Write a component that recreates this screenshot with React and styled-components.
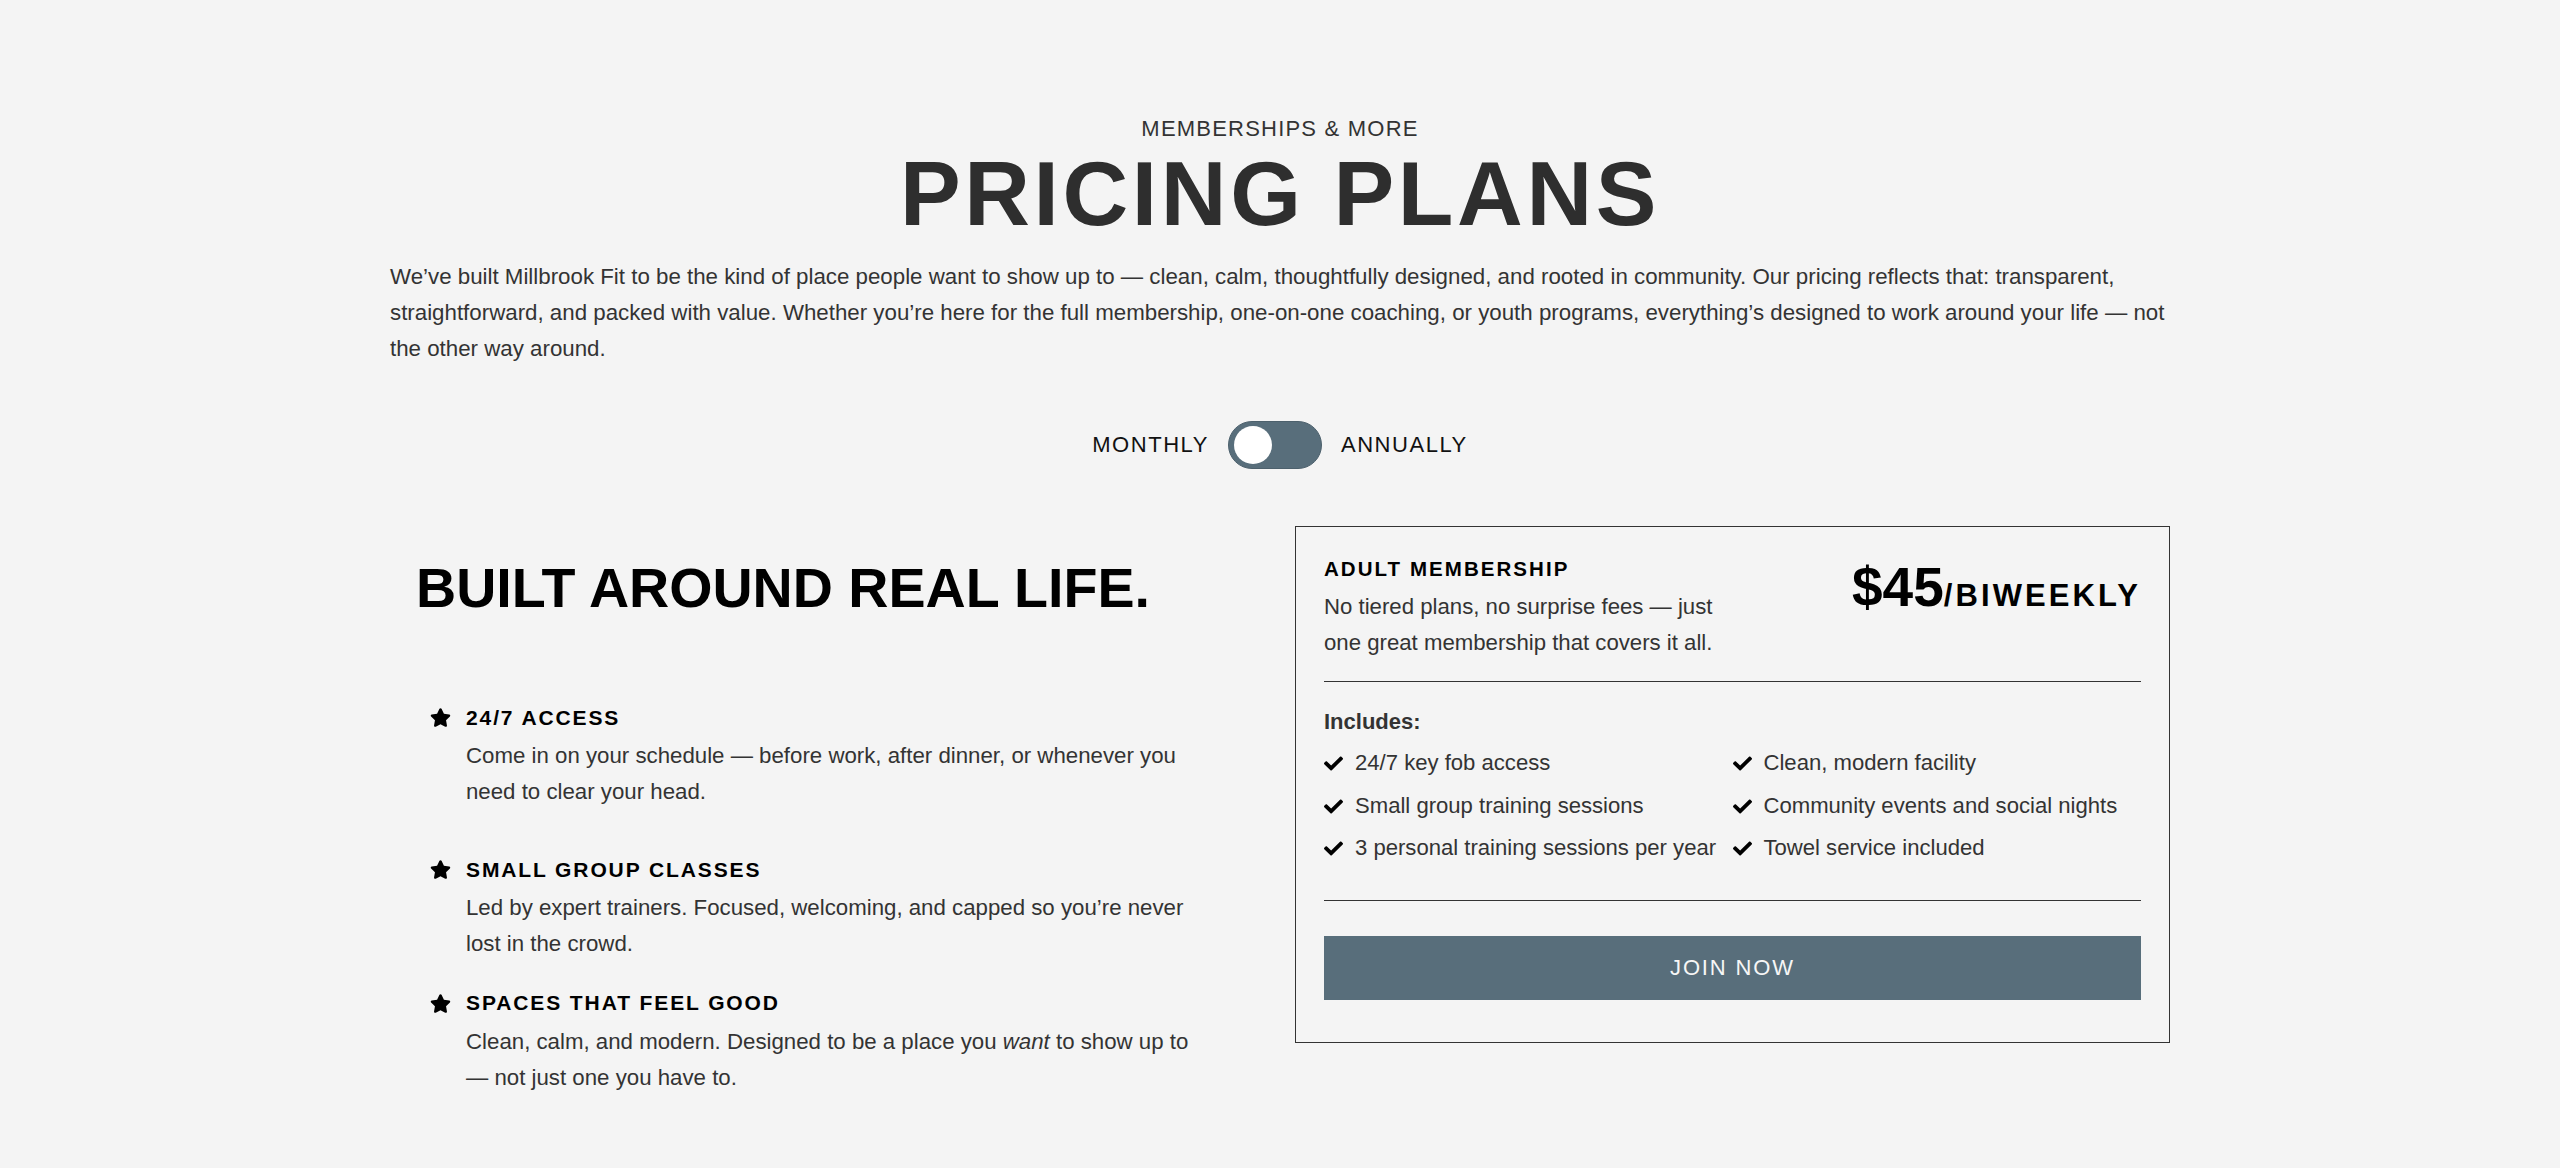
import styled, { createGlobalStyle } from 'styled-components';
import { FaStar, FaCheck } from 'react-icons/fa';

const GlobalStyle = createGlobalStyle`
  * {
    box-sizing: border-box;
  }
  body {
    margin: 0;
    background: #f4f4f4;
    color: #333;
    font-family: 'Liberation Sans', Arial, Helvetica, sans-serif;
  }
`;

const Page = styled.section`
  min-height: 100vh;
  padding: 116px 0 80px;
`;

const Container = styled.div`
  max-width: 1780px;
  margin: 0 auto;
`;

const Header = styled.header`
  text-align: center;
`;

const Eyebrow = styled.p`
  margin: 0 0 2px;
  font-size: 22px;
  line-height: 1.2;
  letter-spacing: 0.055em;
  color: #333;
`;

const Title = styled.h1`
  margin: 0;
  font-size: 91px;
  line-height: 1.09;
  font-weight: 700;
  letter-spacing: 0.04em;
  color: #2e2e2e;
`;

const Intro = styled.p`
  margin: 15px 0 0;
  text-align: left;
  font-size: 22.3px;
  line-height: 36px;
  color: #333;
`;

const ToggleRow = styled.div`
  margin-top: 54px;
  display: flex;
  justify-content: center;
  align-items: center;
  gap: 19px;
`;

const ToggleLabel = styled.span`
  font-size: 22px;
  letter-spacing: 0.07em;
  color: #111;
`;

const Switch = styled.button`
  width: 94px;
  height: 48px;
  padding: 0 5px;
  border: 1px solid #4d616d;
  border-radius: 24px;
  background: #586e7b;
  display: flex;
  align-items: center;
  justify-content: ${(p) => (p.$on ? 'flex-end' : 'flex-start')};
  cursor: pointer;
`;

const Knob = styled.span`
  width: 38px;
  height: 38px;
  border-radius: 50%;
  background: #fff;
`;

const Columns = styled.div`
  margin-top: 57px;
  display: grid;
  grid-template-columns: 1fr 1fr;
  gap: 30px;
  align-items: start;
`;

const InfoColumn = styled.div`
  padding: 29px 26px;
`;

const InfoHeading = styled.h2`
  margin: 0;
  font-size: 55.6px;
  line-height: 66px;
  font-weight: 700;
  color: #000;
`;

const FeatureList = styled.ul`
  list-style: none;
  margin: 82px 0 0;
  padding: 0 0 0 14px;
`;

const Feature = styled.li`
  display: flex;
  gap: 15px;
  margin-top: ${(p) => p.$space}px;
`;

const StarBox = styled.span`
  height: 29.4px;
  display: flex;
  align-items: center;
  color: #000;
  flex-shrink: 0;
`;

const FeatureBody = styled.div`
  max-width: 740px;
`;

const FeatureTitle = styled.h3`
  margin: 0;
  font-size: 21px;
  line-height: 29.4px;
  font-weight: 700;
  letter-spacing: 0.09em;
  color: #000;
`;

const FeatureText = styled.p`
  margin: 6px 0 0;
  font-size: 22.25px;
  line-height: 36px;
  color: #333;
`;

const Card = styled.div`
  border: 1px solid #333;
  padding: 28px 28px 42px;
`;

const CardHead = styled.div`
  display: flex;
  justify-content: space-between;
  align-items: flex-start;
`;

const CardIntro = styled.div`
  max-width: 50%;
`;

const CardTitle = styled.h3`
  margin: 0;
  font-size: 20.5px;
  line-height: 28px;
  font-weight: 700;
  letter-spacing: 0.1em;
  color: #000;
`;

const CardText = styled.p`
  margin: 6px 0 0;
  font-size: 22.2px;
  line-height: 36px;
  color: #333;
`;

const Price = styled.div`
  margin-top: 5px;
  font-size: 55px;
  line-height: 1;
  font-weight: 700;
  color: #000;
  white-space: nowrap;
`;

const Per = styled.span`
  font-size: 31px;
  letter-spacing: 0.1em;
`;

const Rule = styled.div`
  height: 1px;
  background: #333;
  margin-top: ${(p) => p.$gap}px;
`;

const IncludesLabel = styled.p`
  margin: 23px 0 0;
  font-size: 22px;
  line-height: 33.6px;
  font-weight: 700;
  color: #333;
`;

const IncludeGrid = styled.ul`
  list-style: none;
  margin: 8px 0 0;
  padding: 0;
  display: grid;
  grid-template-columns: 1fr 1fr;
  row-gap: 8px;
`;

const IncludeItem = styled.li`
  display: flex;
  align-items: center;
  gap: 12px;
  font-size: 22.1px;
  line-height: 34.65px;
  color: #333;
  white-space: nowrap;
  svg {
    color: #000;
    flex-shrink: 0;
  }
`;

const JoinButton = styled.button`
  margin-top: 35px;
  width: 100%;
  height: 64px;
  border: none;
  background: #586e7b;
  color: #f6f6f6;
  font-family: inherit;
  font-size: 22px;
  letter-spacing: 0.085em;
  cursor: pointer;
`;

const features = [
  {
    title: '24/7 ACCESS',
    text: 'Come in on your schedule — before work, after dinner, or whenever you need to clear your head.',
    space: 0,
  },
  {
    title: 'SMALL GROUP CLASSES',
    text: 'Led by expert trainers. Focused, welcoming, and capped so you’re never lost in the crowd.',
    space: 45,
  },
  {
    title: 'SPACES THAT FEEL GOOD',
    text: (
      <>
        Clean, calm, and modern. Designed to be a place you <em>want</em> to show up to — not just one
        you have to.
      </>
    ),
    space: 26,
  },
];

const includes = [
  '24/7 key fob access',
  'Clean, modern facility',
  'Small group training sessions',
  'Community events and social nights',
  '3 personal training sessions per year',
  'Towel service included',
];

const App = () => {
  return (
    <>
      <GlobalStyle />
      <Page>
        <Container>
          <Header>
            <Eyebrow>MEMBERSHIPS &amp; MORE</Eyebrow>
            <Title>PRICING PLANS</Title>
            <Intro>
              We’ve built Millbrook Fit to be the kind of place people want to show up to — clean, calm,
              thoughtfully designed, and rooted in community. Our pricing reflects that: transparent,
              straightforward, and packed with value. Whether you’re here for the full membership,
              one-on-one coaching, or youth programs, everything’s designed to work around your life — not
              the other way around.
            </Intro>
          </Header>

          <ToggleRow>
            <ToggleLabel>MONTHLY</ToggleLabel>
            <Switch aria-label='Billing period'>
              <Knob />
            </Switch>
            <ToggleLabel>ANNUALLY</ToggleLabel>
          </ToggleRow>

          <Columns>
            <InfoColumn>
              <InfoHeading>BUILT AROUND REAL LIFE.</InfoHeading>
              <FeatureList>
                {features.map((f) => (
                  <Feature key={f.title} $space={f.space}>
                    <StarBox>
                      <FaStar size={21} />
                    </StarBox>
                    <FeatureBody>
                      <FeatureTitle>{f.title}</FeatureTitle>
                      <FeatureText>{f.text}</FeatureText>
                    </FeatureBody>
                  </Feature>
                ))}
              </FeatureList>
            </InfoColumn>

            <Card>
              <CardHead>
                <CardIntro>
                  <CardTitle>ADULT MEMBERSHIP</CardTitle>
                  <CardText>No tiered plans, no surprise fees — just one great membership that covers it all.</CardText>
                </CardIntro>
                <Price>
                  $45<Per>/BIWEEKLY</Per>
                </Price>
              </CardHead>
              <Rule $gap={20} />
              <IncludesLabel>Includes:</IncludesLabel>
              <IncludeGrid>
                {includes.map((item) => (
                  <IncludeItem key={item}>
                    <FaCheck size={19} />
                    {item}
                  </IncludeItem>
                ))}
              </IncludeGrid>
              <Rule $gap={34} />
              <JoinButton>JOIN NOW</JoinButton>
            </Card>
          </Columns>
        </Container>
      </Page>
    </>
  );
};

export default App;
